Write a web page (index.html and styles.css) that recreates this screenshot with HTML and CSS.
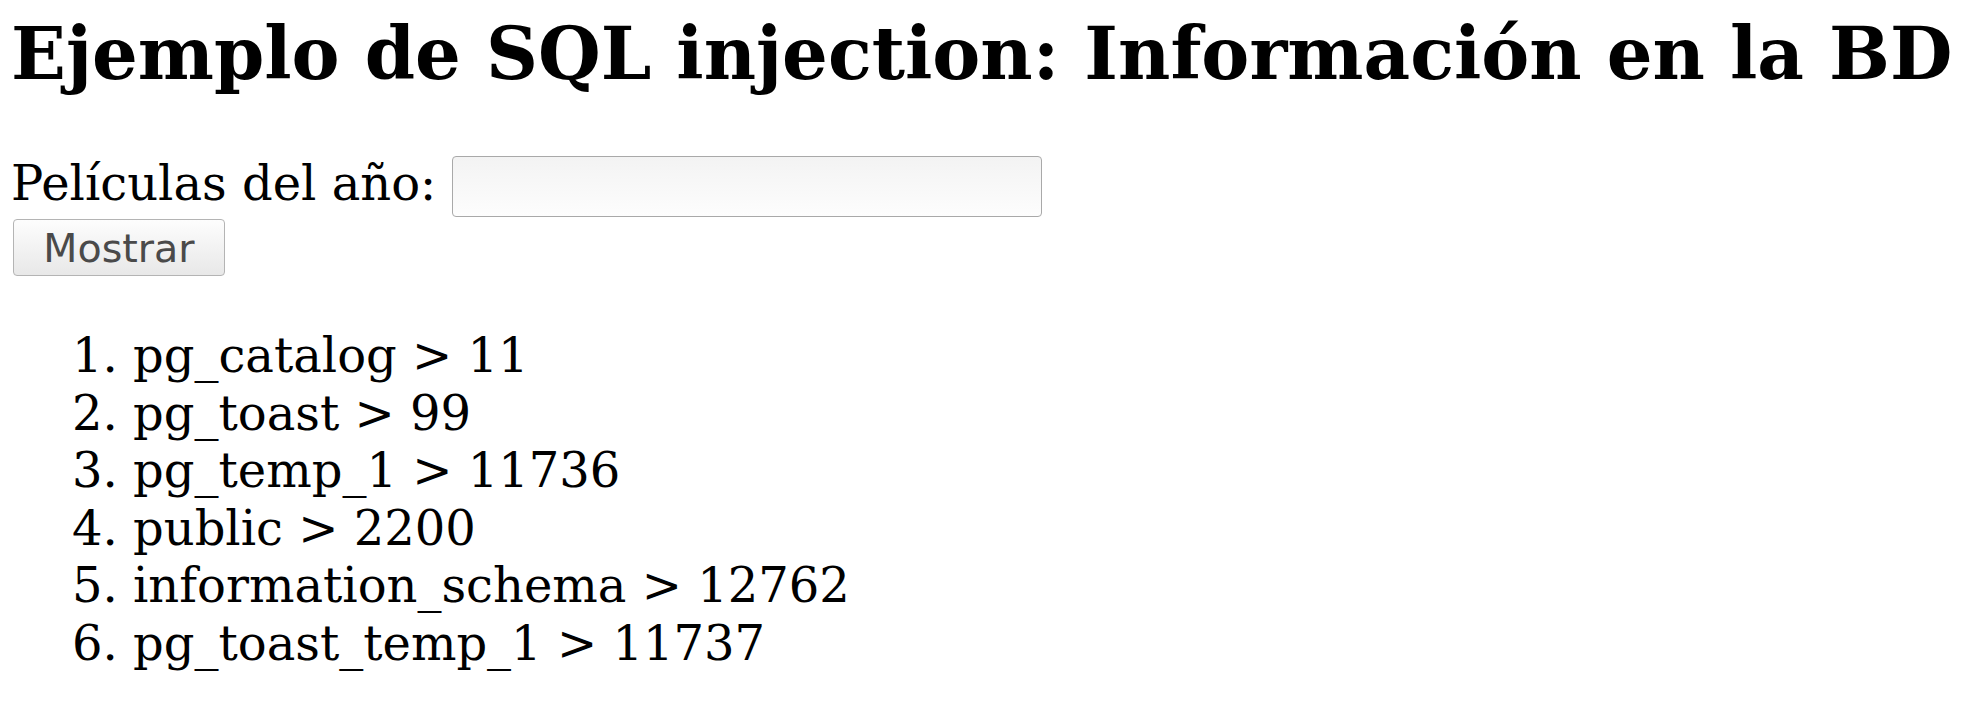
FILE: index.html
```html
<!DOCTYPE html>
<html lang="es">
<head>
<meta charset="utf-8">
<title>SQL injection</title>
<link rel="stylesheet" href="styles.css">
</head>
<body>
<h1 class="title">Ejemplo de SQL injection: Información en la BD</h1>
<form class="form">
  <div class="row">
    <label class="label" for="anio">Películas del año:</label>
    <input class="field" id="anio" type="text">
  </div>
  <button class="btn" type="button">Mostrar</button>
</form>
<ol class="list">
  <li>pg_catalog &gt; 11</li>
  <li>pg_toast &gt; 99</li>
  <li>pg_temp_1 &gt; 11736</li>
  <li>public &gt; 2200</li>
  <li>information_schema &gt; 12762</li>
  <li>pg_toast_temp_1 &gt; 11737</li>
</ol>
</body>
</html>
```
FILE: styles.css
```css
html, body {
  background: #ffffff;
}
body {
  margin: 0;
  padding: 13px 0 0 11px;
  font-family: "DejaVu Serif", serif;
  color: #000;
}
.title {
  margin: 0;
  font-size: 72px;
  font-weight: bold;
  line-height: 81px;
}
.form {
  margin: 60px 0 0 0;
}
.row {
  display: flex;
  align-items: flex-start;
}
.label {
  font-size: 48px;
  line-height: 58px;
  margin-right: 16px;
}
.field {
  margin: 2px 0 0 0;
  width: 590px;
  height: 61px;
  box-sizing: border-box;
  border: 1px solid #a9a9a9;
  border-radius: 4px;
  background: linear-gradient(#f3f3f3, #fdfdfd);
  padding: 0 8px;
  font-size: 38px;
}
.btn {
  display: block;
  margin: 2px 0 0 2px;
  width: 212px;
  height: 57px;
  box-sizing: border-box;
  border: 1px solid #b4b4b4;
  border-radius: 4px;
  background: linear-gradient(#fdfdfd, #e8e8e8);
  color: #4a4a4a;
  font-family: "DejaVu Sans", sans-serif;
  font-size: 39.6px;
  padding: 0;
}
.list {
  margin: 51px 0 0 0;
  padding-left: 122px;
  font-size: 48px;
  line-height: 57.6px;
}
```
